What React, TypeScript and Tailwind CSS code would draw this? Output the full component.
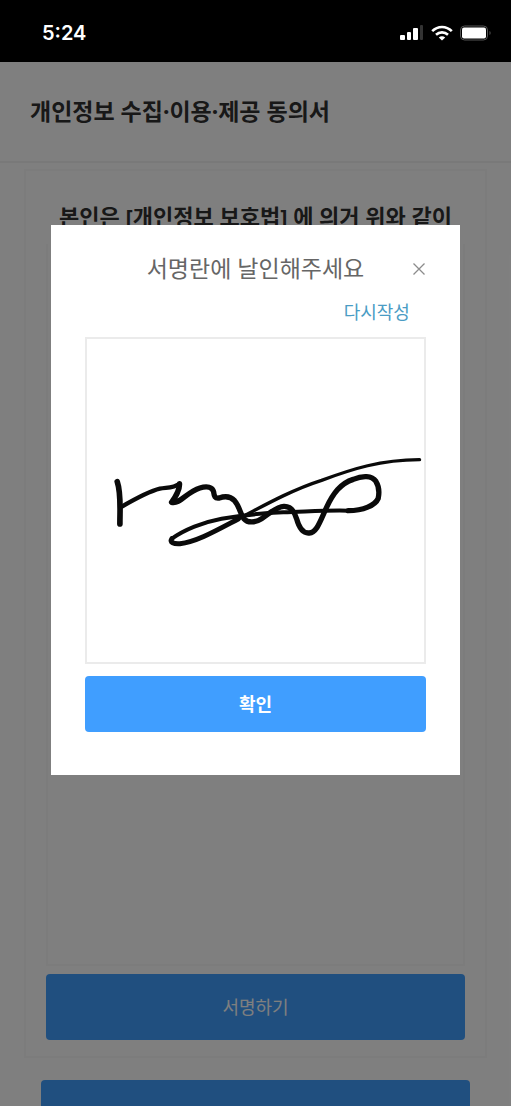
import { useState } from 'react';

function StatusBar() {
  return (
    <div className="flex h-[62px] shrink-0 items-center justify-between bg-black pt-1 pr-[19px] pl-[42px] text-white">
      <span className="font-[Inter,sans-serif] text-xl font-semibold">5:24</span>
      <div className="flex items-center gap-[7px]">
        {/* Signal */}
        <svg className="h-4 w-6" viewBox="0 0 24 16" fill="currentColor">
          <rect x="0" y="10" width="5" height="5" rx="1" />
          <rect x="7" y="7" width="4" height="8" rx="1" />
          <rect x="13" y="3" width="5" height="12" rx="1" />
          <rect x="20" y="0" width="3" height="15" rx="1" opacity="0.2" />
        </svg>
        {/* Wifi */}
        <svg className="h-4 w-[22px]" viewBox="0 0 22 16" fill="none" stroke="currentColor" strokeWidth="2.6">
          <path d="M1.2 6.2C6.8 0.6 15.2 0.6 20.8 6.2" />
          <path d="M5 9.8C8.5 6.6 13.5 6.6 17 9.8" />
          <path d="M11 15.5L7.8 12.4C9.6 10.8 12.4 10.8 14.2 12.4Z" fill="currentColor" stroke="none" />
        </svg>
        {/* Battery */}
        <svg className="h-4 w-8" viewBox="0 0 32 16" fill="none">
          <rect x="0.5" y="1" width="27" height="14" rx="4" stroke="#555555" />
          <rect x="2" y="2.5" width="24" height="11" rx="2" fill="currentColor" />
          <path d="M29.5 6C31 6.5 31 9.5 29.5 10Z" fill="#555555" />
        </svg>
      </div>
    </div>
  );
}

function Signature() {
  return (
    <svg
      className="h-full w-full"
      viewBox="24 -273 1005 969"
      fill="none"
      stroke="#0a0a0a"
      strokeLinecap="round"
      strokeLinejoin="round"
    >
      <path strokeWidth="17" d="M112 155C124 190 120 235 120 282" />
      <path
        strokeWidth="13"
        d="M122 232C160 210 205 184 240 176C262 172 280 175 299 161"
      />
      <path
        strokeWidth="16"
        d="M299 161C300 180 288 198 275 217C300 224 320 186 360 174C382 167 398 171 401 185C403 200 405 206 418 204C432 199 450 197 464 212C480 230 480 252 492 266C504 280 526 278 545 266C570 250 588 231 612 229C634 228 644 246 650 266C657 292 667 311 688 309C712 307 722 270 740 232C760 190 782 160 820 148C848 136 876 136 888 154C898 170 898 190 895 205C886 226 850 242 805 242"
      />
      <path
        strokeWidth="12"
        d="M805 242C740 240 680 245 610 247C540 250 470 258 425 266C370 276 312 300 276 326"
      />
      <path strokeWidth="15" d="M276 326C268 338 282 342 300 341C350 336 412 300 475 267" />
      <path strokeWidth="10" d="M475 267C560 222 640 178 725 151C820 116 900 90 1019 89" />
    </svg>
  );
}

interface SignatureModalProps {
  onClose: () => void;
}

function SignatureModal({ onClose }: SignatureModalProps) {
  const [signed, setSigned] = useState(true);

  return (
    <div className="absolute inset-0 flex items-start justify-center bg-black/50 pt-[163px]">
      <div role="dialog" aria-labelledby="sign-title" className="w-4/5 bg-white px-[34px] pt-[23px] pb-[43px]">
        {/* Title */}
        <div className="relative text-center">
          <h2 id="sign-title" className="text-[23px] leading-10 text-[#666666]">
            서명란에 날인해주세요
          </h2>
          <button onClick={onClose} aria-label="닫기" className="absolute top-[14px] right-0 p-px text-[#8c8c8c]">
            <svg className="h-3 w-3" viewBox="0 0 12 12" fill="none" stroke="currentColor" strokeWidth="1.3">
              <path d="M0.5 0.5L11.5 11.5M11.5 0.5L0.5 11.5" />
            </svg>
          </button>
        </div>

        <div className="mb-px flex justify-end pr-4">
          <button onClick={() => setSigned(false)} className="text-lg leading-12 text-[#4a9cc4]">
            다시작성
          </button>
        </div>

        {/* Signature pad */}
        <div className="h-[327px] border-2 border-[#ebebeb]">{signed && <Signature />}</div>

        <button
          onClick={onClose}
          className="mt-3 h-14 w-full rounded bg-[#409eff] text-lg font-bold text-white"
        >
          확인
        </button>
      </div>
    </div>
  );
}

export default function App() {
  const [isOpen, setIsOpen] = useState(true);

  return (
    <div className="flex h-screen flex-col overflow-hidden bg-white font-['Noto_Sans','Noto_Sans_CJK_KR',sans-serif]">
      <StatusBar />

      <div className="relative flex min-h-0 flex-1 flex-col overflow-hidden">
        <header className="flex h-[101px] shrink-0 items-center border-b-2 border-[#f3f3f3] px-[30px]">
          <h1 className="text-[23px] font-bold text-[#303030]">개인정보 수집·이용·제공 동의서</h1>
        </header>

        <main className="px-6 pt-[6px]">
          <section className="flex h-[889px] flex-col border-2 border-[#f8f8f8] px-5 pt-[29px] pb-4">
            <p className="text-center text-[22px] leading-8 font-bold whitespace-nowrap text-[#303030]">
              본인은 [개인정보 보호법] 에 의거 위와 같이
            </p>
            <div className="mt-3 mb-2 flex-1 border-2 border-t-0 border-[#f8f8f8]" />
            <button
              onClick={() => setIsOpen(true)}
              className="h-[66px] shrink-0 rounded bg-[#409eff] text-lg text-white"
            >
              서명하기
            </button>
          </section>

          <div className="mt-[22px] px-[17px]">
            <button className="h-[72px] w-full rounded bg-[#409eff] text-lg leading-none font-bold text-white">
              확인
            </button>
          </div>
        </main>

        {isOpen && <SignatureModal onClose={() => setIsOpen(false)} />}
      </div>
    </div>
  );
}
